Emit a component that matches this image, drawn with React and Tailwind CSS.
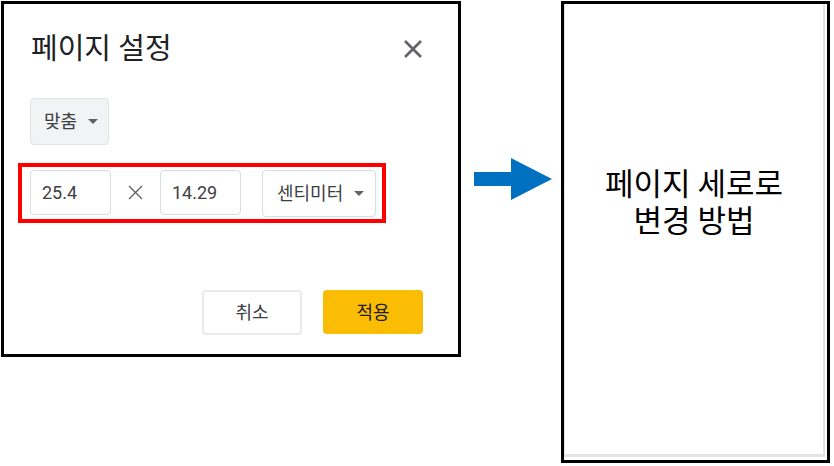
export default function App() {
  const font = { fontFamily: 'Roboto, "Noto Sans CJK KR", sans-serif' };
  return (
    <div className="flex h-[466px] w-[834px] items-start bg-white" style={font}>
      {/* Dialog */}
      <div className="ml-[1px] mt-[1px] flex h-[356px] w-[460px] shrink-0 flex-col border-[3px] border-black bg-white">
        <div className="flex items-center justify-between pl-[27px] pr-[36px] pt-[27px]">
          <div className="text-[29px] leading-[36px] text-[#202124]">페이지 설정</div>
          <svg width="18" height="18" viewBox="0 0 18 18">
            <path d="M1 1L17 17M17 1L1 17" stroke="#5f6368" strokeWidth="2.6" />
          </svg>
        </div>
        <div className="mt-[31px] pl-[26px]">
          <div className="flex h-[47px] w-[79px] items-center rounded-[4px] border border-[#e3e3e3] bg-[#f1f3f4] pl-[13px]">
            <span className="text-[18px] leading-none text-[#3c4043]">맞춤</span>
            <svg className="ml-[11px]" width="10" height="5" viewBox="0 0 10 5">
              <path d="M0 0H10L5 5Z" fill="#5f6368" />
            </svg>
          </div>
        </div>
        <div className="ml-[14px] mt-[18px] flex h-[60px] w-[368px] items-start border-[4px] border-[#ff0000] pl-[8px] pt-[3px]">
          <div className="flex h-[45px] w-[81px] items-center rounded-[4px] border border-[#dadce0] pl-[11px] text-[18px] text-[#3c4043]">
            25.4
          </div>
          <div className="flex h-[45px] w-[49px] items-center justify-center">
            <svg width="15" height="15" viewBox="0 0 15 15">
              <path d="M1 1L14 14M14 1L1 14" stroke="#5f6368" strokeWidth="1.4" />
            </svg>
          </div>
          <div className="flex h-[45px] w-[81px] items-center rounded-[4px] border border-[#dadce0] pl-[11px] text-[18px] text-[#3c4043]">
            14.29
          </div>
          <div className="ml-[21px] flex h-[47px] w-[114px] items-center rounded-[4px] border border-[#dadce0] pl-[14px]">
            <span className="text-[18px] leading-none text-[#3c4043]">센티미터</span>
            <svg className="ml-[11px]" width="10" height="5" viewBox="0 0 10 5">
              <path d="M0 0H10L5 5Z" fill="#5f6368" />
            </svg>
          </div>
        </div>
        <div className="mt-[67px] flex justify-end gap-[21px] pr-[35px]">
          <div className="flex h-[45px] w-[100px] items-center justify-center rounded-[4px] border-2 border-[#e8eaed] bg-white text-[18px] text-[#3c4043]">
            취소
          </div>
          <div className="flex h-[44px] w-[100px] items-center justify-center rounded-[4px] bg-[#fbbc04] text-[18px] text-[#202124]">
            적용
          </div>
        </div>
      </div>

      {/* Arrow */}
      <svg className="ml-[13px] mt-[158px] shrink-0" width="78" height="42" viewBox="0 0 78 42">
        <path d="M0 14H37V0L78 21L37 42V28H0Z" fill="#0070c0" />
      </svg>

      {/* Portrait page */}
      <div className="ml-[9px] mt-[1px] flex h-[462px] w-[269px] shrink-0 border-[3px] border-black bg-white pb-[3px] pr-[2px]">
        <div className="flex flex-1 flex-col items-center border-b-[3px] border-l border-r-[2px] border-[#e3e3e3] bg-white pt-[159px]">
          <div
            className="text-center text-[31px] leading-[37px] text-black"
            style={{ fontFamily: '"Noto Sans CJK KR", sans-serif' }}
          >
            페이지 세로로
            <br />
            변경 방법
          </div>
        </div>
      </div>
    </div>
  );
}
